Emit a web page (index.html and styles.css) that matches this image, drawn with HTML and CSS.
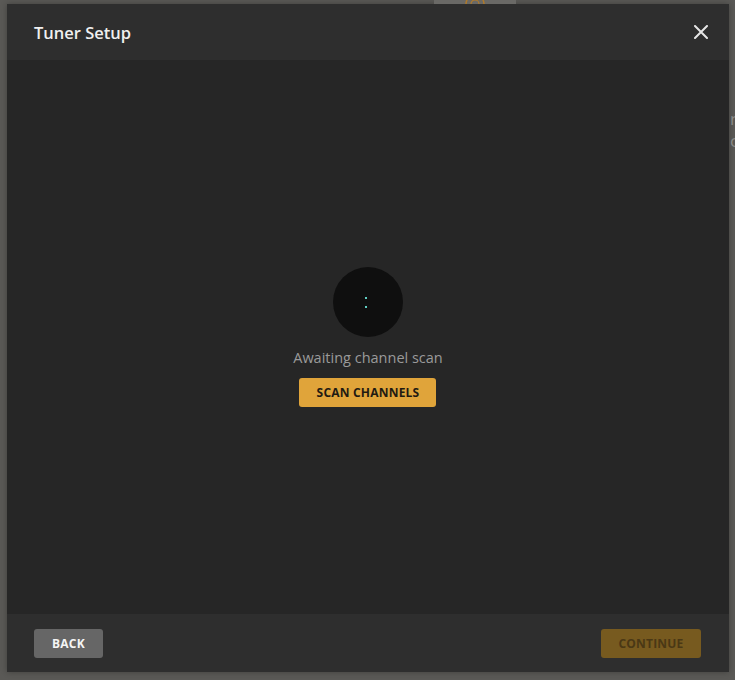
FILE: index.html
```html
<!DOCTYPE html>
<html lang="en">
<head>
  <meta charset="UTF-8" />
  <meta name="viewport" content="width=device-width, initial-scale=1.0"/>
  <title>Tuner Setup</title>
  <link rel="stylesheet" href="styles.css">
</head>
<body>
  <div class="backdrop-tab">
    <svg width="22" height="8" viewBox="0 0 22 8"><path d="M2 8 A9 9 0 0 1 20 8" fill="none" stroke="#b07a2a" stroke-width="1.5"/><path d="M7 8 A4 4 0 0 1 15 8" fill="none" stroke="#b07a2a" stroke-width="1.2"/></svg>
  </div>
  <div class="backdrop-text">n<br>c</div>

  <div class="modal">
    <div class="modal-header">
      <h1 class="modal-title">Tuner Setup</h1>
      <div class="close-btn">
        <svg width="14" height="14" viewBox="0 0 14 14"><path d="M1 1 L13 13 M13 1 L1 13" stroke="#e6e6e6" stroke-width="2" stroke-linecap="round"/></svg>
      </div>
    </div>

    <div class="modal-body">
      <div class="scan-status">
        <div class="scan-dial">
          <span class="dot"></span>
          <span class="dot"></span>
        </div>
        <div class="scan-label">Awaiting channel scan</div>
        <div class="btn btn-primary">SCAN CHANNELS</div>
      </div>
    </div>

    <div class="modal-footer">
      <div class="btn btn-default">BACK</div>
      <div class="btn btn-disabled">CONTINUE</div>
    </div>
  </div>
</body>
</html>
```

FILE: styles.css
```css
* {
  box-sizing: border-box;
}

body {
  font-family: "Open Sans", sans-serif;
  background-color: #5a5956;
  margin: 0;
  padding: 4px 6px 8px 7px;
  height: 680px;
  overflow: hidden;
  position: relative;
}

.backdrop-tab {
  position: absolute;
  top: 0;
  left: 434px;
  width: 82px;
  height: 4px;
  background-color: #6a6966;
  display: flex;
  justify-content: center;
  overflow: hidden;
}

.backdrop-tab svg {
  margin-top: -4px;
}

.backdrop-text {
  position: absolute;
  top: 108px;
  left: 730px;
  font-size: 17px;
  line-height: 22px;
  color: #8a8a88;
}

.modal {
  height: 668px;
  display: flex;
  flex-direction: column;
  background-color: #262626;
  box-shadow: 0 0 6px rgba(0,0,0,0.3);
}

.modal-header {
  height: 56px;
  background-color: #2e2e2e;
  display: flex;
  align-items: center;
  justify-content: space-between;
  padding: 0 21px 0 27px;
}

.modal-title {
  margin: 0;
  font-size: 16.5px;
  font-weight: 600;
  color: #f0f0f0;
}

.close-btn {
  display: flex;
  align-items: center;
}

.modal-body {
  flex: 1;
  display: flex;
  align-items: center;
  justify-content: center;
}

.scan-status {
  display: flex;
  flex-direction: column;
  align-items: center;
}

.scan-dial {
  width: 70px;
  height: 70px;
  border-radius: 50%;
  background-color: #0f0f0f;
  display: flex;
  flex-direction: column;
  align-items: center;
  justify-content: center;
  gap: 7px;
  margin-left: 1px;
}

.dot {
  width: 2px;
  height: 2px;
  background-color: #5fd0c4;
  margin-left: -5px;
}

.scan-label {
  margin-top: 11px;
  font-size: 14.5px;
  color: #9a9a9a;
}

.btn {
  height: 29px;
  border-radius: 3px;
  display: flex;
  align-items: center;
  justify-content: center;
  font-size: 12px;
  font-weight: 700;
  letter-spacing: 0.2px;
}

.btn-primary {
  margin-top: 11px;
  width: 137px;
  background-color: #e0a43a;
  color: #1f1a12;
}

.modal-footer {
  height: 58px;
  background-color: #2e2e2e;
  display: flex;
  align-items: center;
  justify-content: space-between;
  padding: 0 28px 0 27px;
}

.btn-default {
  width: 69px;
  background-color: #666666;
  color: #f5f5f5;
}

.btn-disabled {
  width: 100px;
  background-color: #775a1f;
  color: #4a3815;
}
```
